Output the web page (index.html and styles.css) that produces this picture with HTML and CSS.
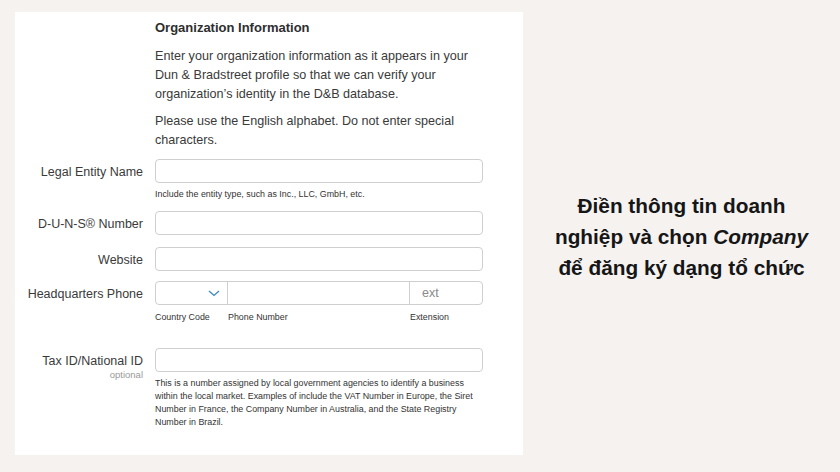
FILE: index.html
```html
<!DOCTYPE html>
<html lang="vi">
<head>
<meta charset="utf-8">
<link rel="stylesheet" href="styles.css">
</head>
<body>
<div class="page">
  <div class="card">
    <div class="form">
      <div class="label-col"></div>
      <div class="field-col intro">
        <h2 class="title">Organization Information</h2>
        <p class="para">Enter your organization information as it appears in your Dun &amp; Bradstreet profile so that we can verify your organization’s identity in the D&amp;B database.</p>
        <p class="para para2">Please use the English alphabet. Do not enter special characters.</p>
      </div>

      <div class="label-col"><span class="label">Legal Entity Name</span></div>
      <div class="field-col">
        <div class="input"></div>
        <div class="hint">Include the entity type, such as Inc., LLC, GmbH, etc.</div>
      </div>

      <div class="label-col row-duns"><span class="label">D-U-N-S® Number</span></div>
      <div class="field-col row-duns"><div class="input"></div></div>

      <div class="label-col row-web"><span class="label">Website</span></div>
      <div class="field-col row-web"><div class="input"></div></div>

      <div class="label-col row-phone"><span class="label">Headquarters Phone</span></div>
      <div class="field-col row-phone">
        <div class="phone">
          <div class="seg seg-cc">
            <svg class="chev" width="12" height="7" viewBox="0 0 12 7"><path d="M1 1 L6 5.5 L11 1" fill="none" stroke="#3b87c9" stroke-width="1.3"/></svg>
          </div>
          <div class="seg seg-num"></div>
          <div class="seg seg-ext"><span class="ph">ext</span></div>
        </div>
        <div class="sublabels">
          <span class="sl sl-cc">Country Code</span>
          <span class="sl sl-num">Phone Number</span>
          <span class="sl sl-ext">Extension</span>
        </div>
      </div>

      <div class="label-col row-tax"><span class="label">Tax ID/National ID</span><span class="optional">optional</span></div>
      <div class="field-col row-tax">
        <div class="input"></div>
        <div class="help">This is a number assigned by local government agencies to identify a business within the local market. Examples of include the VAT Number in Europe, the Siret Number in France, the Company Number in Australia, and the State Registry Number in Brazil.</div>
      </div>
    </div>
  </div>
  <div class="side">
    <p class="caption">Điền thông tin doanh<br>nghiệp và chọn <em>Company</em><br>để đăng ký dạng tổ chức</p>
  </div>
</div>
</body>
</html>
```

FILE: styles.css
```css
html, body {
  margin: 0;
  padding: 0;
}
body {
  width: 840px;
  height: 472px;
  background: #f5f2f0;
  font-family: "Liberation Sans", Arial, sans-serif;
  color: #333;
  overflow: hidden;
}
.page {
  display: flex;
  height: 472px;
  padding: 12px 0 17px 15px;
  box-sizing: border-box;
}
.card {
  width: 508px;
  background: #fff;
  padding-top: 6px;
  box-sizing: border-box;
}
.form {
  display: grid;
  grid-template-columns: 128px 328px;
  column-gap: 12px;
}
.label-col {
  display: flex;
  flex-direction: column;
  align-items: flex-end;
}
.label {
  font-size: 12.5px;
  line-height: 24px;
  padding-top: 1px;
  color: #3a3a3a;
  white-space: nowrap;
}
.optional {
  font-size: 9.5px;
  line-height: 10px;
  color: #9a9a9a;
  margin-top: -3px;
}
.title {
  margin: 0;
  font-size: 13px;
  line-height: 19px;
  font-weight: bold;
  color: #2e2e2e;
}
.para {
  margin: 10px 0 0;
  font-size: 12.6px;
  line-height: 19px;
  color: #3a3a3a;
}
.para2 {
  margin-top: 8px;
}
.intro {
  padding-bottom: 9px;
}
.input {
  height: 24px;
  box-sizing: border-box;
  border: 1px solid #cfcfcf;
  border-radius: 4px;
  background: #fff;
}
.hint {
  margin-top: 5px;
  font-size: 8.9px;
  line-height: 12px;
  color: #333;
}
.row-duns { margin-top: 11px; }
.row-web { margin-top: 11px; }
.row-phone { margin-top: 9px; }
.row-tax { margin-top: 25px; }
.phone {
  display: flex;
  height: 24px;
  box-sizing: border-box;
  border: 1px solid #cfcfcf;
  border-radius: 4px;
}
.seg {
  display: flex;
  align-items: center;
  box-sizing: border-box;
}
.seg-cc {
  width: 72px;
  border-right: 1px solid #cfcfcf;
  justify-content: flex-end;
  padding-right: 7px;
}
.seg-num {
  width: 182px;
  border-right: 1px solid #cfcfcf;
}
.seg-ext {
  flex: 1;
  padding-left: 12px;
}
.ph {
  font-size: 12.5px;
  color: #8a8a8a;
}
.sublabels {
  display: flex;
  margin-top: 6px;
  font-size: 8.9px;
  line-height: 12px;
  color: #333;
}
.sl-cc { width: 73px; }
.sl-num { width: 182px; }
.help {
  margin-top: 5px;
  font-size: 8.9px;
  line-height: 13px;
  color: #333;
  width: 320px;
}
.side {
  flex: 1;
  display: flex;
  align-items: center;
  justify-content: center;
  padding-top: 6px;
}
.caption {
  margin: 0;
  text-align: center;
  font-size: 20.8px;
  line-height: 31px;
  font-weight: bold;
  color: #161616;
  white-space: nowrap;
}
.caption em {
  font-style: italic;
}
```
